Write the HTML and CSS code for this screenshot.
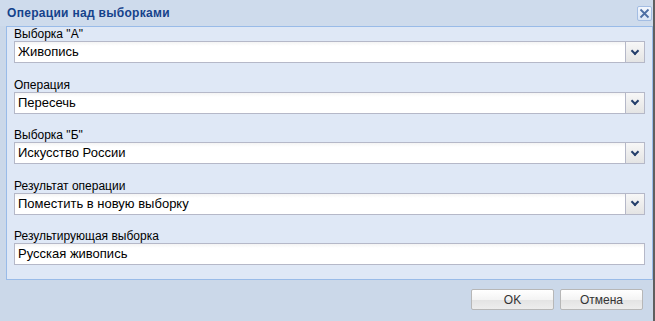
FILE: index.html
```html
<!DOCTYPE html>
<html lang="ru">
<head>
  <meta charset="UTF-8" />
  <title>Операции над выборками</title>
  <link rel="stylesheet" href="styles.css">
</head>
<body>

  <div class="window">
    <!-- header -->
    <div class="window-header">
      <span class="window-title">Операции над выборками</span>
      <span class="close-btn">
        <svg width="11" height="11" viewBox="0 0 11 11">
          <path d="M1.5 1.5 L9.5 9.5 M9.5 1.5 L1.5 9.5" stroke="#4d6fa4" stroke-width="1.8" fill="none"/>
        </svg>
      </span>
    </div>

    <!-- form -->
    <div class="window-body">
      <div class="field">
        <label>Выборка "А"</label>
        <div class="combo">
          <div class="combo-input">Живопись</div>
          <div class="combo-trigger"><span class="chevron"></span></div>
        </div>
      </div>

      <div class="field">
        <label>Операция</label>
        <div class="combo">
          <div class="combo-input">Пересечь</div>
          <div class="combo-trigger"><span class="chevron"></span></div>
        </div>
      </div>

      <div class="field">
        <label>Выборка "Б"</label>
        <div class="combo">
          <div class="combo-input">Искусство России</div>
          <div class="combo-trigger"><span class="chevron"></span></div>
        </div>
      </div>

      <div class="field">
        <label>Результат операции</label>
        <div class="combo">
          <div class="combo-input">Поместить в новую выборку</div>
          <div class="combo-trigger"><span class="chevron"></span></div>
        </div>
      </div>

      <div class="field">
        <label>Результирующая выборка</label>
        <div class="text-input">Русская живопись</div>
      </div>
    </div>

    <!-- buttons -->
    <div class="window-footer">
      <button class="btn">OK</button>
      <button class="btn">Отмена</button>
    </div>
  </div>

</body>
</html>
```

FILE: styles.css
```css
* {
  box-sizing: border-box;
  margin: 0;
  padding: 0;
}

body {
  background: #cbd8e9;
  font-family: 'Liberation Sans', Arial, sans-serif;
}

.window {
  width: 655px;
  height: 321px;
  display: flex;
  flex-direction: column;
  border-right: 2px solid #5f5f5f;
  background: #cbd8e9;
}

.window-header {
  height: 26px;
  display: flex;
  align-items: center;
  justify-content: space-between;
  padding: 0 1px 0 7px;
  background: #cedbec;
}

.window-title {
  font-weight: bold;
  font-size: 12px;
  letter-spacing: 0.3px;
  color: #15428b;
}

.close-btn {
  width: 15px;
  height: 15px;
  display: flex;
  align-items: center;
  justify-content: center;
  border: 1px solid #a3bde3;
  border-radius: 2px;
  background: linear-gradient(#f3f7fd, #d9e5f6);
}

.window-body {
  margin: 0 0 0 6px;
  height: 254px;
  border: 1px solid #99bbe8;
  background: #dfe8f6;
  padding: 0 7px 0 7px;
}

.field {
  margin-bottom: 14.5px;
}

.field label {
  display: block;
  font-size: 12px;
  line-height: 14px;
  color: #000;
}

.combo {
  display: flex;
  height: 22px;
}

.combo-input,
.text-input {
  flex: 1;
  height: 22px;
  border: 1px solid #b5b8c8;
  background: linear-gradient(#f4f4f4, #ffffff 4px);
  font-size: 13px;
  line-height: 20px;
  padding-left: 3px;
  color: #000;
}

.combo-trigger {
  width: 19px;
  height: 22px;
  border: 1px solid #b5b8c8;
  border-left: none;
  background: linear-gradient(#f7f7f7, #e4e4e4);
  display: flex;
  align-items: center;
  justify-content: center;
}

.chevron {
  width: 6px;
  height: 6px;
  border-right: 2px solid #243e6b;
  border-bottom: 2px solid #243e6b;
  transform: rotate(45deg);
  margin-top: -3px;
}

.window-footer {
  flex: 1;
  display: flex;
  justify-content: flex-end;
  align-items: flex-start;
  gap: 6px;
  padding: 9px 10px 0 0;
}

.btn {
  width: 83px;
  height: 21px;
  border: 1px solid #b7b7b7;
  border-radius: 2px;
  background: linear-gradient(#ffffff, #f4f4f4 50%, #e3e3e3 51%, #ededed);
  font-family: 'Liberation Sans', Arial, sans-serif;
  font-size: 12px;
  color: #333;
}
```
